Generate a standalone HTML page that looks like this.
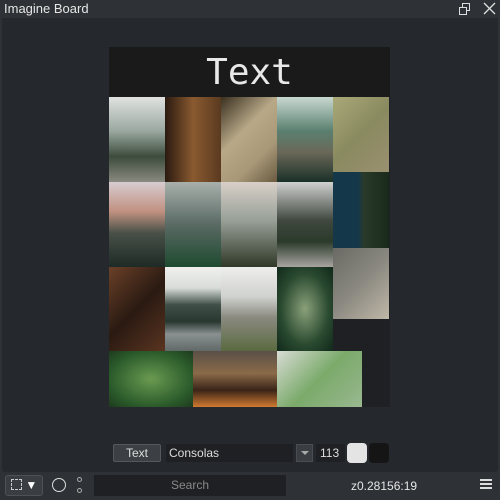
<!DOCTYPE html>
<html><head><style>
*{margin:0;padding:0;box-sizing:border-box}
body{width:500px;height:500px;background:#2e3236;font-family:"Liberation Sans",sans-serif;position:relative;overflow:hidden}
.a{position:absolute}
.t{position:absolute}
</style></head><body>
<div class="a" style="left:0;top:0;width:500px;height:18px;background:#2e3236"></div>
<div class="a" style="left:4px;top:1px;font-size:13px;color:#e6e6e6">Imagine Board</div>
<svg class="a" style="left:458px;top:2px" width="40" height="14"><rect x="1.5" y="5.5" width="7" height="7" fill="none" stroke="#ddd"/><path d="M4.5 5.5V1.5h7v7h-3" fill="none" stroke="#ddd"/><path d="M26 1l11 11M37 1L26 12" stroke="#ddd" stroke-width="1.3"/></svg>
<div class="a" style="left:2px;top:18px;width:496px;height:454px;background:#25282c;border-radius:0 0 3px 3px"></div>
<div class="a" style="left:109px;top:47px;width:281px;height:360px;background:#1e2023"></div>
<div class="a" style="left:109px;top:47px;width:281px;height:50px;background:#1a1a1a;color:#e8e8e8;font-family:'DejaVu Sans Mono',monospace;font-size:36px;text-align:center;line-height:52px">Text</div>
<!-- row1 -->
<div class="t" style="left:109px;top:97px;width:56px;height:85px;background:linear-gradient(#e0e2e0 0%,#9aa8a0 40%,#3c4c3c 70%,#8a8a80 100%)"></div>
<div class="t" style="left:165px;top:97px;width:56px;height:85px;background:linear-gradient(90deg,#2a1a10,#8a5a30 50%,#5a3a20)"></div>
<div class="t" style="left:221px;top:97px;width:56px;height:85px;background:linear-gradient(135deg,#3a3020,#b8a888 40%,#a89878 70%,#6a5a40)"></div>
<div class="t" style="left:277px;top:97px;width:56px;height:85px;background:linear-gradient(#c8d8d0,#5a8070 40%,#6a6858 65%,#1a3028)"></div>
<div class="t" style="left:333px;top:97px;width:56px;height:75px;background:linear-gradient(135deg,#a8a878,#8a8a60 50%,#9a9070)"></div>
<!-- row2 -->
<div class="t" style="left:109px;top:182px;width:56px;height:85px;background:linear-gradient(#d8ccd0,#c09080 35%,#485048 60%,#1e2a26)"></div>
<div class="t" style="left:165px;top:182px;width:56px;height:85px;background:linear-gradient(#a8b0ac,#5a6a64 50%,#1e4a30)"></div>
<div class="t" style="left:221px;top:182px;width:56px;height:85px;background:linear-gradient(#d8d0c8,#98a098 45%,#303828)"></div>
<div class="t" style="left:277px;top:182px;width:56px;height:85px;background:linear-gradient(#d0d0d0,#404840 45%,#2a3a2a 70%,#a8a4a0)"></div>
<div class="t" style="left:333px;top:172px;width:56px;height:76px;background:linear-gradient(90deg,#14384a 45%,#2a3a2a 55%,#1a2a1a)"></div>
<!-- row3 -->
<div class="t" style="left:109px;top:267px;width:56px;height:84px;background:linear-gradient(135deg,#6a4028,#2a1a12 50%,#5a3420)"></div>
<div class="t" style="left:165px;top:267px;width:56px;height:84px;background:linear-gradient(#f0f0ee,#d8dcd8 25%,#405048 45%,#283830 65%,#8a9090 80%,#606868)"></div>
<div class="t" style="left:221px;top:267px;width:56px;height:84px;background:linear-gradient(#eeeeec,#d0d2d0 35%,#8a8a80 60%,#5a6a40)"></div>
<div class="t" style="left:277px;top:267px;width:56px;height:84px;background:radial-gradient(#8aa07a,#2a4a30 60%,#10281a)"></div>
<div class="t" style="left:333px;top:248px;width:56px;height:71px;background:linear-gradient(135deg,#6a6a64,#8a8880 50%,#c0b8a8)"></div>
<!-- row4 -->
<div class="t" style="left:109px;top:351px;width:84px;height:56px;background:radial-gradient(#6a9a50,#2a5a2a 70%,#1e3a1e)"></div>
<div class="t" style="left:193px;top:351px;width:84px;height:56px;background:linear-gradient(#5a5048,#8a6a48 40%,#3a2418 70%,#d07a30)"></div>
<div class="t" style="left:277px;top:351px;width:85px;height:56px;background:linear-gradient(135deg,#d8dcd4,#7aaa6a 50%,#9ab890)"></div>
<!-- toolbar -->
<div class="a" style="left:113px;top:444px;width:48px;height:18px;background:#3c4044;border:1px solid #55595d;border-radius:2px;color:#ddd;font-size:12px;text-align:center;line-height:16px">Text</div>
<div class="a" style="left:166px;top:444px;width:127px;height:18px;background:#1e2023;color:#ddd;font-size:12px;line-height:18px;padding-left:3px">Consolas</div>
<div class="a" style="left:296px;top:444px;width:17px;height:18px;background:#3a3e42;border:1px solid #4a4e52"><div style="margin:6px auto 0;width:0;height:0;border-left:4px solid transparent;border-right:4px solid transparent;border-top:4px solid #aaa"></div></div>
<div class="a" style="left:316px;top:444px;width:29px;height:18px;background:#1e2023;color:#ddd;font-size:12px;line-height:18px;padding-left:4px">113</div>
<div class="a" style="left:347px;top:443px;width:20px;height:20px;background:#e4e4e4;border-radius:4px"></div>
<div class="a" style="left:369px;top:443px;width:20px;height:20px;background:#151515;border-radius:4px"></div>
<!-- bottom bar -->
<div class="a" style="left:5px;top:475px;width:38px;height:21px;background:#3a3e42;border:1px solid #4e5256;border-radius:3px;color:#fff;font-size:12px;line-height:19px;padding-left:5px"><span style="display:inline-block;width:11px;height:11px;border:1px dashed #ccc;vertical-align:-1px"></span> ▼</div>
<div class="a" style="left:52px;top:478px;width:14px;height:14px;border:1.3px solid #ddd;border-radius:50%"></div>
<div class="a" style="left:77px;top:477px;width:5px;height:5px;border:1px solid #aaa;border-radius:50%"></div>
<div class="a" style="left:77px;top:488px;width:5px;height:5px;border:1px solid #aaa;border-radius:50%"></div>
<div class="a" style="left:94px;top:475px;width:192px;height:21px;background:#1e2023;color:#888;font-size:12px;text-align:center;line-height:21px">Search</div>
<div class="a" style="left:351px;top:479px;color:#e6e6e6;font-size:12px">z0.28156:19</div>
<div class="a" style="left:480px;top:479px;width:12px;height:2px;background:#ddd;box-shadow:0 4px 0 #ddd,0 8px 0 #ddd"></div>
</body></html>
